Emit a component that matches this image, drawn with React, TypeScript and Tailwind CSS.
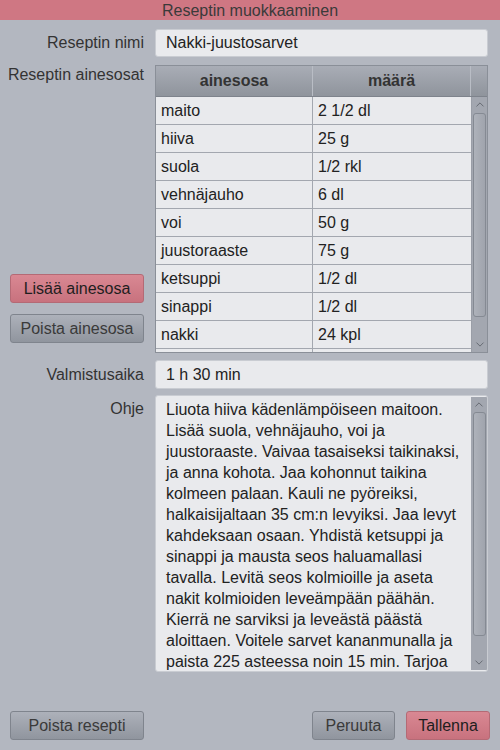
import { ChevronUp, ChevronDown } from "lucide-react";

const ingredients = [
  ["maito", "2 1/2 dl"],
  ["hiiva", "25 g"],
  ["suola", "1/2 rkl"],
  ["vehnäjauho", "6 dl"],
  ["voi", "50 g"],
  ["juustoraaste", "75 g"],
  ["ketsuppi", "1/2 dl"],
  ["sinappi", "1/2 dl"],
  ["nakki", "24 kpl"],
  ["", ""],
];

const ohje = [
  "Liuota hiiva kädenlämpöiseen maitoon.",
  "Lisää suola, vehnäjauho, voi ja",
  "juustoraaste. Vaivaa tasaiseksi taikinaksi,",
  "ja anna kohota. Jaa kohonnut taikina",
  "kolmeen palaan. Kauli ne pyöreiksi,",
  "halkaisijaltaan 35 cm:n levyiksi. Jaa levyt",
  "kahdeksaan osaan. Yhdistä ketsuppi ja",
  "sinappi ja mausta seos haluamallasi",
  "tavalla. Levitä seos kolmioille ja aseta",
  "nakit kolmioiden leveämpään päähän.",
  "Kierrä ne sarviksi ja leveästä päästä",
  "aloittaen. Voitele sarvet kananmunalla ja",
  "paista 225 asteessa noin 15 min. Tarjoa",
];

const font = "font-['Liberation_Sans',Arial,sans-serif]";

function Scrollbar({ thumb }: { thumb: string }) {
  return (
    <div className="flex h-full w-full flex-col items-center bg-[#a3a7b0]">
      <ChevronUp className="mt-[1px] h-[13px] w-[14px] shrink-0 text-[#5d6169]" strokeWidth={1.6} />
      <div className={`w-[13px] shrink-0 rounded-[3px] border border-[#858a93] bg-gradient-to-r from-[#aeb2ba] to-[#a0a4ad] ${thumb}`} />
      <div className="flex-1" />
      <ChevronDown className="mb-[1px] h-[13px] w-[14px] shrink-0 text-[#5d6169]" strokeWidth={1.6} />
    </div>
  );
}

function Button({ label, red, className = "" }: { label: string; red?: boolean; className?: string }) {
  return (
    <button
      className={`h-[29px] rounded-[3px] border text-[16px] ${
        red
          ? "border-[#b46a75] bg-gradient-to-b from-[#d98893] to-[#c8727e] text-[#1e1e1e]"
          : "border-[#7f848d] bg-gradient-to-b from-[#adb1ba] to-[#90959e] text-[#3a3a3a]"
      } ${className}`}
    >
      {label}
    </button>
  );
}

export default function App() {
  return (
    <div className={`flex h-[750px] w-[500px] flex-col bg-[#b3b7c0] text-[16px] text-[#333] ${font}`}>
      {/* title bar */}
      <div className="flex h-[20px] items-center justify-center bg-[#cf7783] pt-[1px] leading-none text-[#3a3a3a]">
        Reseptin muokkaaminen
      </div>

      {/* name */}
      <div className="mt-[9px] flex items-center gap-[11px]">
        <div className="w-[144px] text-right">Reseptin nimi</div>
        <div className="flex h-[28px] w-[333px] items-center rounded-[3px] border border-[#c9ccd2] bg-[#e9eaed] pl-[10px] text-[#222]">
          Nakki-juustosarvet
        </div>
      </div>

      {/* ingredients */}
      <div className="mt-[8px] flex gap-[11px]">
        <div className="flex w-[144px] flex-col items-end pb-[10px]">
          <div className="mt-[1px] leading-[18px]">Reseptin ainesosat</div>
          <div className="flex-1" />
          <Button label="Lisää ainesosa" red className="w-[134px]" />
          <Button label="Poista ainesosa" className="mt-[11px] w-[134px]" />
        </div>
        <div className="flex h-[288px] w-[333px] flex-col border border-[#8a8f98] bg-[#e9eaed]">
          <div className="flex h-[31px] shrink-0 border-b border-[#7e838c] bg-gradient-to-b from-[#a9adb6] to-[#8f949c] font-bold text-[#333]">
            <div className="flex w-[157px] items-center justify-center border-r border-[#b9bdc5]">ainesosa</div>
            <div className="flex w-[158px] items-center justify-center border-r border-[#b9bdc5]">määrä</div>
            <div className="flex-1" />
          </div>
          <div className="flex min-h-0 flex-1">
            <div className="w-[315px] overflow-hidden">
              {ingredients.map(([n, m], i) => (
                <div key={i} className="flex h-[28px] border-b border-[#a3a7af] text-[#222]">
                  <div className="flex w-[157px] items-center border-r border-[#a3a7af] pl-[5px]">{n}</div>
                  <div className="flex w-[158px] items-center pl-[5px]">{m}</div>
                </div>
              ))}
            </div>
            <div className="flex-1 border-l border-[#9a9ea7]">
              <Scrollbar thumb="mt-[2px] h-[204px]" />
            </div>
          </div>
        </div>
      </div>

      {/* time */}
      <div className="mt-[7px] flex items-center gap-[11px]">
        <div className="w-[144px] text-right">Valmistusaika</div>
        <div className="flex h-[29px] w-[333px] items-center rounded-[3px] border border-[#c9ccd2] bg-[#e9eaed] pl-[10px] text-[#222]">
          1 h 30 min
        </div>
      </div>

      {/* instructions */}
      <div className="mt-[6px] flex gap-[11px]">
        <div className="w-[144px] pt-[5px] text-right leading-[18px]">Ohje</div>
        <div className="flex h-[277px] w-[333px] overflow-hidden rounded-[3px] border border-[#c9ccd2] bg-[#e9eaed]">
          <div className="flex-1 overflow-hidden pl-[10px] pt-[3px] leading-[21px] text-[#222]">
            {ohje.map((l) => (
              <div key={l} className="whitespace-nowrap">{l}</div>
            ))}
          </div>
          <div className="w-[16px] py-[1px]">
            <Scrollbar thumb="mt-[1px] h-[224px]" />
          </div>
        </div>
      </div>

      {/* bottom buttons */}
      <div className="mt-[39px] flex items-center px-[10px]">
        <Button label="Poista resepti" className="w-[134px]" />
        <div className="flex-1" />
        <Button label="Peruuta" className="w-[83px]" />
        <Button label="Tallenna" red className="ml-[11px] w-[84px]" />
      </div>
    </div>
  );
}
